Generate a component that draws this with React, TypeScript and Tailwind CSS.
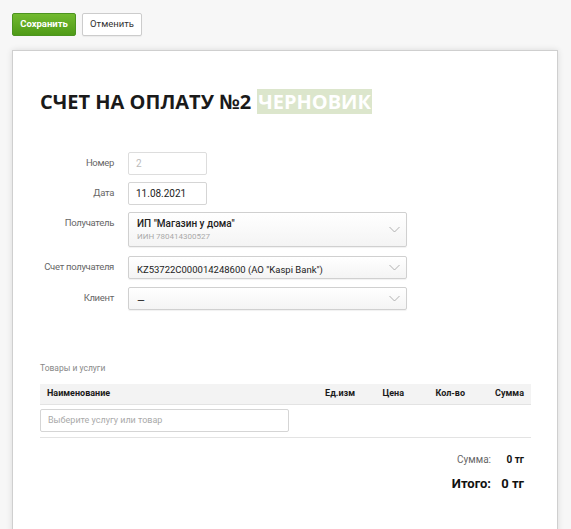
import React from 'react';

const font = { fontFamily: 'Roboto, "Open Sans", "Liberation Sans", sans-serif' };
const titleFont = { fontFamily: '"Open Sans", "Liberation Sans", sans-serif' };

const Label = ({ children }: { children: React.ReactNode }) => (
  <div className="ml-[-20px] w-[94px] shrink-0 whitespace-nowrap pt-[4px] text-right text-[9.5px] leading-[14px] tracking-[-0.3px] text-[#666]">
    {children}
  </div>
);

const Chevron = () => (
  <svg width="11" height="7" viewBox="0 0 11 7" className="shrink-0">
    <polyline points="0.5,1 5.5,6 10.5,1" fill="none" stroke="#a8a8a8" strokeWidth="0.9" />
  </svg>
);

const SelectBox = ({ children, tall }: { children: React.ReactNode; tall?: boolean }) => (
  <div
    className={`flex w-[279px] items-center justify-between rounded-[2px] border border-[#d0d0d0] bg-gradient-to-b from-white to-[#f4f4f4] pl-[8px] pr-[6px] shadow-[0_1px_1px_rgba(0,0,0,0.06)] ${
      tall ? 'h-[35px]' : 'h-[23px]'
    }`}
  >
    <div className="min-w-0">{children}</div>
    <Chevron />
  </div>
);

const App = () => {
  return (
    <div className="min-h-[529px] bg-[#f7f7f7] px-[12px] pt-[13px]" style={font}>
      {/* Toolbar */}
      <div className="flex gap-[6px]">
        <button className="h-[23px] w-[64px] rounded-[2px] border border-[#4c9420] bg-gradient-to-b from-[#72ba2f] to-[#4f9b17] text-[9.5px] font-bold text-white">
          Сохранить
        </button>
        <button className="h-[23px] w-[60px] rounded-[2px] border border-[#ccc] bg-white text-[9.5px] text-[#333] shadow-[0_1px_1px_rgba(0,0,0,0.05)]">
          Отменить
        </button>
      </div>

      {/* Invoice sheet */}
      <div className="mt-[14px] h-[500px] w-[546px] border border-[#cfcfcf] bg-white pl-[27px] pr-[26px] pt-[38px] shadow-[0_0_6px_rgba(0,0,0,0.12)]">
        <h1 className="flex items-center text-[20px] font-bold leading-[25px] text-[#1a1a1a]" style={titleFont}>
          СЧЕТ НА ОПЛАТУ №2
          <span className="ml-[6px] bg-[#dce6cc] px-[1px] text-white">ЧЕРНОВИК</span>
        </h1>

        <div className="mt-[38px] flex flex-col">
          <div className="flex gap-[14px]">
            <Label>Номер</Label>
            <div className="flex h-[23px] w-[79px] items-center rounded-[2px] border border-[#ddd] px-[7px] text-[10px] text-[#bbb]">
              2
            </div>
          </div>
          <div className="mt-[7px] flex gap-[14px]">
            <Label>Дата</Label>
            <div className="flex h-[23px] w-[79px] items-center rounded-[2px] border border-[#d5d5d5] px-[7px] text-[10px] text-[#222]">
              11.08.2021
            </div>
          </div>
          <div className="mt-[7px] flex gap-[14px]">
            <Label>Получатель</Label>
            <SelectBox tall>
              <div className="text-[10px] font-medium leading-[14px] text-[#222]">ИП "Магазин у дома"</div>
              <div className="text-[8px] leading-[11px] text-[#aaa]">ИИН 780414300527</div>
            </SelectBox>
          </div>
          <div className="mt-[9px] flex gap-[14px]">
            <Label>Счет получателя</Label>
            <SelectBox>
              <span className="text-[9.5px] text-[#222]">KZ53722C000014248600 (АО "Kaspi Bank")</span>
            </SelectBox>
          </div>
          <div className="mt-[8px] flex gap-[14px]">
            <Label>Клиент</Label>
            <SelectBox>
              <span className="text-[10px] text-[#222]">—</span>
            </SelectBox>
          </div>
        </div>

        {/* Goods table */}
        <div className="mt-[52px] text-[8.5px] text-[#888]">Товары и услуги</div>
        <div className="mt-[9px] grid h-[21px] grid-cols-[1fr_80px_49px_61px_59px] items-center border-b border-[#e3e3e3] bg-[#f3f3f3] pr-[7px] text-[9px] font-bold text-[#1a1a1a]">
          <div className="pl-[7px]">Наименование</div>
          <div className="text-right">Ед.изм</div>
          <div className="text-right">Цена</div>
          <div className="text-right">Кол-во</div>
          <div className="text-right">Сумма</div>
        </div>
        <div className="border-b border-[#e3e3e3] pb-[5px] pt-[4px]">
          <div className="flex h-[23px] w-[249px] items-center rounded-[2px] border border-[#d5d5d5] px-[7px] text-[9px] text-[#aaa]">
            Выберите услугу или товар
          </div>
        </div>

        <div className="mt-[14px] flex flex-col items-end pr-[7px]">
          <div className="flex items-center text-[10px]">
            <span className="text-[#666]">Сумма:</span>
            <span className="w-[33px] text-right font-bold text-[#111]">0 тг</span>
          </div>
          <div className="mt-[7px] flex items-center text-[13px] font-bold text-[#111]">
            <span>Итого:</span>
            <span className="w-[33px] text-right">0 тг</span>
          </div>
        </div>
      </div>
    </div>
  );
};

export default App;
